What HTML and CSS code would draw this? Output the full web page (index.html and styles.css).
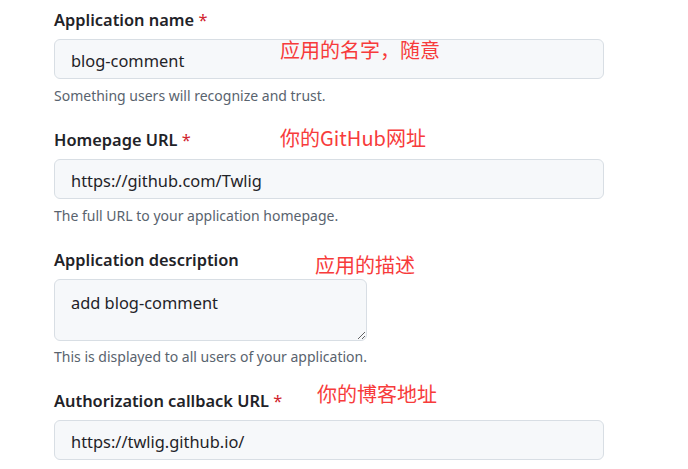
FILE: index.html
```html
<!DOCTYPE html>
<html lang="zh">
<head>
<meta charset="utf-8">
<link rel="stylesheet" href="styles.css">
</head>
<body>
<form class="form">
  <div class="group">
    <label class="label">Application name <span class="req">*</span></label>
    <span class="note note-1">应用的名字，随意</span>
    <input class="input" type="text" value="blog-comment">
    <p class="help">Something users will recognize and trust.</p>
  </div>
  <div class="group">
    <label class="label">Homepage URL <span class="req">*</span></label>
    <span class="note note-2">你的GitHub网址</span>
    <input class="input" type="text" value="https://github.com/Twlig">
    <p class="help">The full URL to your application homepage.</p>
  </div>
  <div class="group">
    <label class="label">Application description</label>
    <span class="note note-3">应用的描述</span>
    <textarea class="textarea">add blog-comment</textarea>
    <p class="help help-tight">This is displayed to all users of your application.</p>
  </div>
  <div class="group">
    <label class="label">Authorization callback URL <span class="req">*</span></label>
    <span class="note note-4">你的博客地址</span>
    <input class="input" type="text" value="https://twlig.github.io/">
  </div>
</form>
</body>
</html>
```
FILE: styles.css
```css
html, body {
  margin: 0;
  padding: 0;
  background: #ffffff;
}
body {
  font-family: "Noto Sans", "Open Sans", "Noto Sans CJK SC", sans-serif;
  color: #1f2328;
}
.form {
  padding: 9px 0 0 54px;
  width: 550px;
}
.group {
  position: relative;
  margin-bottom: 24px;
}
.label {
  display: block;
  font-size: 16.4px;
  font-weight: 600;
  line-height: 21px;
  margin-bottom: 9px;
  color: #1f2328;
}
.req {
  color: #d1242f;
  font-weight: 400;
}
.input, .textarea {
  box-sizing: border-box;
  display: block;
  width: 550px;
  height: 40px;
  margin: 0;
  padding: 3px 16px 0;
  font-family: "Noto Sans", "Open Sans", sans-serif;
  font-size: 16.4px;
  color: #1f2328;
  background: #f6f8fa;
  border: 1px solid #d8dee4;
  border-radius: 6px;
  outline: none;
}
.textarea {
  width: 313px;
  height: 62px;
  padding: 12px 16px 0;
  line-height: 22px;
  resize: vertical;
}
.help {
  margin: 7px 0 0;
  font-size: 14px;
  line-height: 19px;
  color: #59636e;
}
.help-tight {
  margin-top: 6px;
}
.note {
  position: absolute;
  font-family: "Noto Sans CJK SC", sans-serif;
  font-size: 20px;
  line-height: 24px;
  color: #f73b3b;
  white-space: nowrap;
}
.note-1 { left: 226px; top: 29px; }
.note-2 { left: 226px; top: -3px; }
.note-3 { left: 261px; top: 4px; }
.note-4 { left: 263px; top: -8px; }
```
